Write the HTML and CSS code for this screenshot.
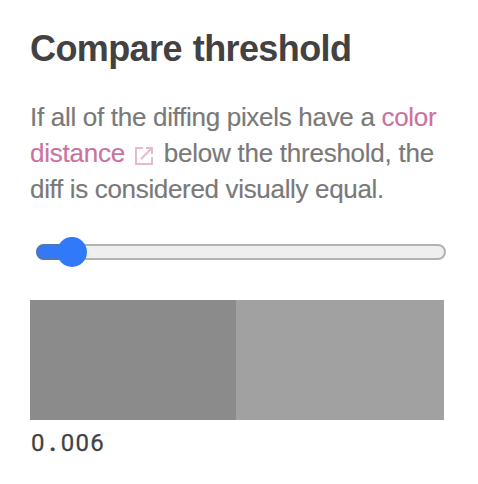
FILE: index.html
```html
<!DOCTYPE html>
<html lang="en">
<head>
<meta charset="utf-8">
<title>Compare threshold</title>
<link rel="stylesheet" href="styles.css">
</head>
<body>
<main class="panel">
  <h1 class="title">Compare threshold</h1>
  <p class="description"><span class="line line-1">If all of the diffing pixels have a <a class="link">color</a></span><span class="line line-2"><a class="link">distance<svg class="external" viewBox="0 0 18 18" width="18" height="18"><path d="M8 1H1v16h16v-7M6 12L16.5 1.5M11 1h6v6"/></svg></a> below the threshold, the</span><span class="line line-3">diff is considered visually equal.</span></p>
  <div class="slider"><div class="fill"></div><div class="thumb"></div></div>
  <div class="swatches"><div class="swatch dark"></div><div class="swatch light"></div></div>
  <div class="value">0<span class="point">.</span>006</div>
</main>
</body>
</html>
```
FILE: styles.css
```css
body { margin: 0; background: #fff; }
.panel { padding: 27px 30px 0; font-family: "Liberation Sans", Helvetica, Arial, sans-serif; }
.title { margin: 0; font-size: 36px; line-height: 44px; font-weight: 700; letter-spacing: -0.6px; word-spacing: 1.5px; color: #424242; white-space: nowrap; }
.description { margin: 28px 0 0; font-size: 26px; line-height: 36px; color: #797979; white-space: nowrap; -webkit-text-stroke: 0.15px; }
.line { display: block; }
.line-1 { letter-spacing: -0.3px; }
.line-2 { letter-spacing: -0.25px; }
.line-3 { letter-spacing: -0.33px; }
.link { color: #cc729f; }
.external { margin: 0 4px 0 10px; vertical-align: -3px; fill: none; stroke: #e6b9cf; stroke-width: 2; }
.slider { position: relative; box-sizing: border-box; width: 410px; height: 16px; margin: 37px 0 0 6px; border: 2px solid #b2b2b2; border-radius: 8px; background: #efefef; }
.fill { box-sizing: border-box; width: 36px; height: 16px; margin: -2px; border: 2px solid #4f78bb; border-radius: 8px 0 0 8px; background: #3478f6; }
.thumb { position: absolute; left: 19px; top: -9px; width: 30px; height: 30px; border-radius: 50%; background: #3079f8; }
.swatches { display: flex; width: 414px; height: 120px; margin-top: 40px; }
.swatch.dark { width: 206px; background: #8b8b8b; }
.swatch.light { flex: 1; background: #a1a1a1; }
.value { margin: 7px 0 0 1px; font: 24px/32px Roboto, sans-serif; letter-spacing: 1.3px; color: #424242; -webkit-text-stroke: 0.25px; }
.point { display: inline-block; width: 15px; text-align: center; font-weight: 700; }
```
